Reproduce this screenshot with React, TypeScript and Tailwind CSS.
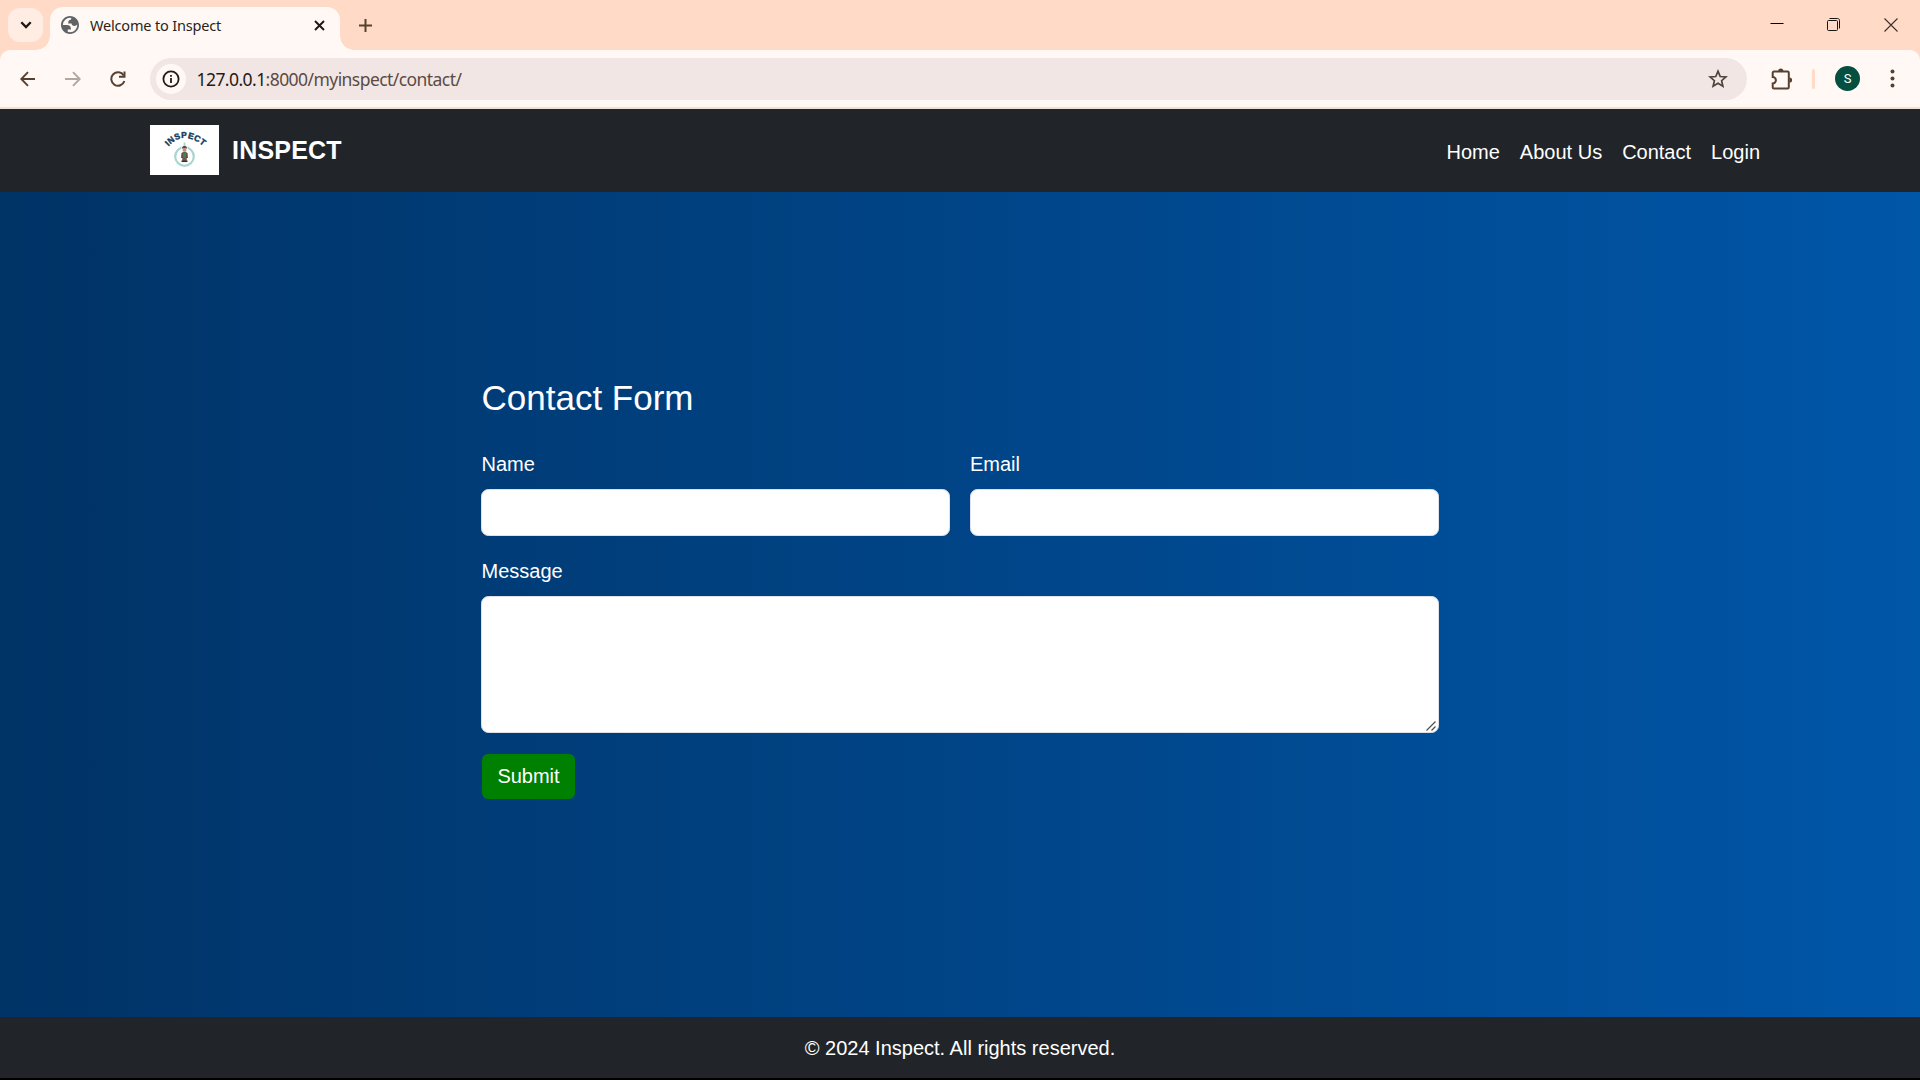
import React from "react";

function TabStrip() {
  return (
    <div className="flex h-[50px] shrink-0 bg-[#ffdbc7]">
      <div className="flex w-[50px] shrink-0 items-start pt-2 pl-2">
        <button className="grid h-[34px] w-[35px] place-items-center rounded-xl bg-[#ffede3]">
          <svg width="12" height="8" viewBox="0 0 12 8" fill="none" stroke="#1f1612" strokeWidth="2.3">
            <path d="M1.3 1.3 6 6l4.700-4.700" />
          </svg>
        </button>
      </div>
      <div className="relative mt-[7px] flex h-[43px] w-[290px] shrink-0 items-center rounded-t-[13px] bg-[#fff8f5] pb-[7px] pl-[11px] font-['Noto_Sans','Open_Sans',sans-serif]">
        <span className="absolute bottom-0 -left-[14px] size-[14px] bg-[radial-gradient(circle_at_0_0,transparent_13.500px,#fff8f5_14px)]" />
        <span className="absolute -right-[14px] bottom-0 size-[14px] bg-[radial-gradient(circle_at_100%_0,transparent_13.500px,#fff8f5_14px)]" />
        <svg width="18" height="18" viewBox="2 2 20 20" fill="#5f6368" fillRule="evenodd">
          <path d="M12 2C6.480 2 2 6.480 2 12s4.480 10 10 10 10-4.480 10-10S17.520 2 12 2zM4 12h4.400c3.407.022 4.922 1.730 4.543 5.127H9.488v2.470a8.004 8.004 0 0 0 10.498-8.080C19.327 12.507 18.332 13 17 13c-2.137 0-3.206-.916-3.206-2.750h-3.748c-.274-2.728.683-4.092 2.870-4.092 0-.975.327-1.597.811-1.970A8.004 8.004 0 0 0 4 12z" />
        </svg>
        <span className="mt-[1px] ml-[11px] text-[14.500px] whitespace-nowrap text-[#2a1f1a] tracking-[-0.180px]">Welcome to Inspect</span>
        <svg className="absolute top-[13px] right-[15px]" width="11" height="11" viewBox="0 0 11 11" stroke="#1f1612" strokeWidth="1.900">
          <path d="m1 1 9 9M10 1l-9 9" />
        </svg>
      </div>
      <svg className="mt-[19px] ml-[19px]" width="13" height="13" viewBox="0 0 13 13" stroke="#574030" strokeWidth="2">
        <path d="M6.500 0v13M0 6.500h13" />
      </svg>
      <div className="mr-[22px] ml-auto flex pt-[18px]">
        <svg width="14" height="14" viewBox="0 0 14 14" stroke="#000" strokeWidth="1">
          <path d="M.5 5.500h13" />
        </svg>
        <svg className="ml-[43px]" width="14" height="14" viewBox="0 0 14 14" fill="none" stroke="#1b1512" strokeWidth="1">
          <rect x=".5" y="2.500" width="10" height="10" rx="1" />
          <path d="M2.500.5h8c1.300 0 2 .7 2 2v8" />
        </svg>
        <svg className="ml-[43px]" width="14" height="14" viewBox="0 0 14 14" stroke="#3a302b" strokeWidth="1.100">
          <path d="m.5.5 13 13M13.500.5l-13 13" />
        </svg>
      </div>
    </div>
  );
}

function Toolbar() {
  return (
    <div className="h-[59px] shrink-0 bg-[#ffdbc7]">
      <div className="flex h-full items-start rounded-t-[10px] bg-[#fff8f5] pt-2 shadow-[inset_0_-2px_0_#f3dfd3]">
        <div className="flex h-[42px] w-[150px] shrink-0 items-center">
          <svg className="-mt-[1px] ml-5" width="16" height="16" viewBox="0 0 16 16" fill="none" stroke="#574030" strokeWidth="1.900">
            <path d="M15 8H1.500M8 1.200 1.300 8 8 14.800" />
          </svg>
          <svg className="-mt-[1px] ml-[29px]" width="16" height="16" viewBox="0 0 16 16" fill="none" stroke="#b3a5a0" strokeWidth="1.900">
            <path d="M0 8h14.500M8 1.200 14.700 8 8 14.800" />
          </svg>
          <svg className="-mt-[1px] ml-[29px]" width="16" height="16" viewBox="0 0 16 16" fill="none" stroke="#574030" strokeWidth="2">
            <path d="M13.700 4.500A6.700 6.700 0 1 0 14.400 10" />
            <path d="M14.500.5v5.200H9" />
          </svg>
        </div>
        <div className="flex h-[42px] w-[1597px] shrink-0 items-center rounded-full bg-[#f2e6e4] pr-[19px] pl-[6px]">
          <span className="grid size-[30px] place-items-center rounded-full bg-[#fff8f5]">
            <svg width="18" height="18" viewBox="0 0 18 18" fill="none" stroke="#241a16" strokeWidth="1.800">
              <circle cx="9" cy="9" r="7.600" />
              <path d="M9 8v5M9 5v1.800" />
            </svg>
          </span>
          <span className="ml-[10.500px] font-['Noto_Sans','Open_Sans',sans-serif] text-[17.500px] tracking-[-0.560px] whitespace-nowrap text-[#5a4b45]">
            <span className="text-[#241a16]">127.0.0.1</span>:8000/myinspect/contact/
          </span>
          <svg className="ml-auto" width="20" height="20" viewBox="0 0 20 20" fill="none" stroke="#50423c" strokeWidth="1.700">
            <path d="m10 2.200 2.200 5.300 5.700.4-4.300 3.800 1.300 5.500L10 14.300l-4.900 2.900 1.300-5.500-4.300-3.800 5.700-.4Z" />
          </svg>
        </div>
        <div className="flex h-[42px] items-center pb-[1px]">
          <svg className="ml-[23px]" width="23" height="22" viewBox="0 0 23 22">
            <path
              d="M4 3.500h13.500a1.300 1.300 0 0 1 1.300 1.300v14.400a1.300 1.300 0 0 1-1.300 1.300H4a1.300 1.300 0 0 1-1.300-1.300V15.400A3.100 3.100 0 0 0 2.700 9V4.800A1.300 1.300 0 0 1 4 3.500Z"
              fill="none"
              stroke="#574030"
              strokeWidth="2"
            />
            <path d="M8.200 3a2.600 2.600 0 0 1 5.200 0ZM19.500 9.400a2.600 2.600 0 0 1 0 5.200Z" fill="#574030" />
          </svg>
          <span className="ml-[19px] h-5 w-[3px] rounded-full bg-[#ffdbc7]" />
          <span className="ml-5 grid size-[25px] place-items-center rounded-full bg-[#044f40] font-['Roboto',sans-serif] text-[13px] text-white">S</span>
          <svg className="ml-[30px]" width="5" height="19" viewBox="0 0 5 19" fill="#574030">
            <circle cx="2.500" cy="2.500" r="2" />
            <circle cx="2.500" cy="9.500" r="2" />
            <circle cx="2.500" cy="16.500" r="2" />
          </svg>
        </div>
      </div>
    </div>
  );
}

function Logo() {
  return (
    <svg className="mb-[1px] bg-white" width="69" height="50" viewBox="0 0 69 50">
      <defs>
        <path id="logo-arc" d="M18.500 21.500Q34.500 4 54.500 22.500" />
      </defs>
      <text
        fill="#12395c"
        stroke="#12395c"
        strokeWidth="0.400"
        fontFamily="Liberation Sans, sans-serif"
        fontWeight="700"
        fontSize="8.500"
        letterSpacing="0.400"
      >
        <textPath href="#logo-arc">INSPECT</textPath>
      </text>
      <circle cx="34.500" cy="31.500" r="9.300" fill="none" stroke="#a9d5cf" strokeWidth="2.200" />
      <path d="M31.500 20h6v5h-6z" fill="#fff" />
      <path d="M34.500 17.500v4" stroke="#a9d5cf" strokeWidth="1.800" />
      <path d="M32.200 22.500c0-2 4.600-2 4.600 0l.3 1h-5.200Z" fill="#514a45" />
      <circle cx="34.500" cy="25" r="2" fill="#c9907c" />
      <path d="M31.500 28c1-1.500 5-1.500 6 0l.5 5h-7Z" fill="#5e5247" />
      <path d="M33 27.500h3v6h-3z" fill="#38884f" />
      <path d="M32.200 33h4.600v3.500h-4.600z" fill="#73584c" />
      <path d="M31.500 36.300h6" stroke="#3b3030" strokeWidth="1.500" />
    </svg>
  );
}

function Navbar() {
  return (
    <header className="flex h-[83px] shrink-0 items-center bg-[#212529] pr-[160px] pl-[150px] text-white">
      <Logo />
      <span className="ml-[13px] text-[25px] leading-[37px] font-bold tracking-[0.200px]">INSPECT</span>
      <nav className="mt-[2px] ml-auto flex gap-5 leading-[30px]">
        <a href="#home">Home</a>
        <a href="#about">About Us</a>
        <a href="#contact">Contact</a>
        <a href="#login">Login</a>
      </nav>
    </header>
  );
}

const fieldClass = "block w-full rounded-[7.500px] border border-[#dee2e6] bg-white text-black outline-none";

function ContactForm() {
  return (
    <form className="w-[958px] pt-[185px]">
      <h1 className="pl-[0.500px] text-[35px] leading-[42px]">Contact Form</h1>
      <div className="mt-[30px] grid grid-cols-2 gap-5">
        <label className="leading-[30px]">
          <span className="block pb-[10px] pl-[0.500px]">Name</span>
          <input className={`${fieldClass} h-[47px] px-[15px]`} />
        </label>
        <label className="leading-[30px]">
          <span className="block pb-[10px]">Email</span>
          <input className={`${fieldClass} h-[47px] px-[15px]`} />
        </label>
      </div>
      <label className="relative mt-5 block leading-[30px]">
        <span className="block pb-[10px] pl-[0.500px]">Message</span>
        <textarea className={`${fieldClass} h-[137px] resize-none px-[15px] py-2`} />
        <svg className="absolute right-[3px] bottom-[2px]" width="10" height="10" viewBox="0 0 10 10" stroke="#4d4d4d" strokeWidth="1.200">
          <path d="M.5 9.500 9.500.5M5.500 9.500l4-4" />
        </svg>
      </label>
      <button type="button" className="mt-[21px] ml-[1px] h-[45px] w-[93px] rounded-[6px] bg-[#008000] pb-[1px] text-white">
        Submit
      </button>
    </form>
  );
}

export default function App() {
  return (
    <div className="flex h-[1080px] w-[1920px] flex-col overflow-hidden border-b-2 border-black font-['Liberation_Sans',Arial,sans-serif] text-[20px]">
      <TabStrip />
      <Toolbar />
      <Navbar />
      <main className="flex flex-1 justify-center bg-[linear-gradient(to_right,#003366,#0056a8)] text-white">
        <ContactForm />
      </main>
      <footer className="flex h-[61px] shrink-0 items-center justify-center bg-[#212529] text-white">
        © 2024 Inspect. All rights reserved.
      </footer>
    </div>
  );
}
